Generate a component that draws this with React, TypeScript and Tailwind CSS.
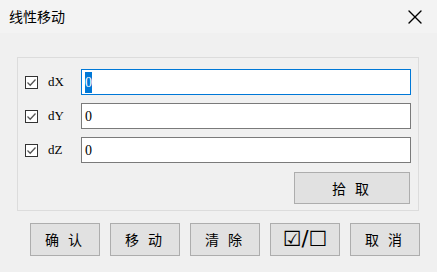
import { X } from "lucide-react";

const ROWS = ["dX", "dY", "dZ"] as const;
const BUTTONS = ["确 认", "移 动", "清 除", "☑/☐", "取 消"] as const;

const cjk = "font-['Noto_Sans_CJK_SC',sans-serif]";

function Check() {
  return (
    <span className="grid h-[13px] w-[13px] place-items-center border border-[#333] bg-white">
      <svg width="11" height="11" viewBox="0 0 11 11" aria-hidden>
        <path d="M1.5 5.5 L4.2 8.2 L9.5 2.5" fill="none" stroke="#555" strokeWidth="1.3" />
      </svg>
    </span>
  );
}

export default function App() {
  return (
    <div className="h-[272px] w-[437px] bg-[#f0f0f0] text-black">
      <div className="flex h-[33px] items-center justify-between bg-[#f3f3f3] pl-[9px] pr-[10px]">
        <span className={`${cjk} text-[14px]`}>线性移动</span>
        <X className="h-[24px] w-[24px]" strokeWidth={1.4} aria-hidden />
      </div>

      <div className="ml-[17px] mt-[24px] w-[402px] border border-[#dcdcdc] px-[7px] pb-[6px] pt-[11px]">
        <div className="flex flex-col gap-[8px]">
          {ROWS.map((r, i) => (
            <div key={r} className="flex h-[26px] items-center">
              <Check />
              <span className="ml-[10px] w-[33px] font-['Liberation_Serif',serif] text-[13px]">{r}</span>
              <div
                className={`flex h-[26px] w-[330px] items-center bg-white px-[3px] font-['Liberation_Serif',serif] text-[14px] ${
                  i === 0 ? "border border-[#0078d7]" : "border border-[#7a7a7a]"
                }`}
              >
                <span className={i === 0 ? "bg-[#0078d7] text-white" : ""}>0</span>
              </div>
            </div>
          ))}
        </div>
        <div className="mt-[9px] flex justify-end pr-[1px]">
          <button className={`${cjk} h-[32px] w-[116px] border border-[#adadad] bg-[#e1e1e1] text-[14px] tracking-[3px]`}>
            拾 取
          </button>
        </div>
      </div>

      <div className="ml-[30px] mt-[12px] flex gap-[10px]">
        {BUTTONS.map((b) => (
          <button
            key={b}
            className={`h-[33px] w-[70px] border border-[#adadad] bg-[#e1e1e1] ${
              b === "☑/☐" ? "font-['DejaVu_Sans',sans-serif] text-[21px] leading-none" : `${cjk} text-[14px] tracking-[3px]`
            }`}
          >
            {b}
          </button>
        ))}
      </div>
    </div>
  );
}
